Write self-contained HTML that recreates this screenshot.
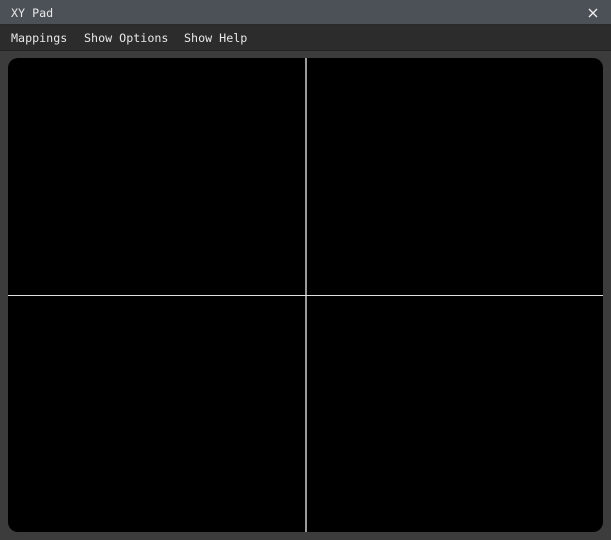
<!DOCTYPE html>
<html><head><style>
html,body{margin:0;padding:0;width:611px;height:540px;overflow:hidden;background:#3c3c3c;font-family:"DejaVu Sans Mono","Liberation Mono",monospace;}
.title{position:absolute;left:0;top:0;width:611px;height:24px;background:#4b5157;border-bottom:1px solid #2a2a2a;color:#e8e8e8;font-size:11.7px;line-height:26px;}
.title span{position:absolute;left:11px;top:0;}
.close{position:absolute;left:588px;top:8px;width:10px;height:10px;}
.menu{position:absolute;left:0;top:25px;width:611px;height:25px;background:#2c2c2c;border-bottom:1px solid #222;color:#e8e8e8;font-size:11.7px;line-height:26px;}
.menu span{position:absolute;top:0;}
.pad{position:absolute;left:8px;top:58px;width:595px;height:474px;background:#000;border-radius:10px;overflow:hidden;}
.v{position:absolute;left:297px;top:0;width:2px;height:474px;background:#9a9a9a;}
.h{position:absolute;left:0;top:237px;width:595px;height:1px;background:#e0e0e0;}
</style></head><body>
<div class="title"><span>XY Pad</span>
<svg class="close" viewBox="0 0 10 10"><path d="M1 1L9 9M9 1L1 9" stroke="#f0f0f0" stroke-width="1.3"/></svg></div>
<div class="menu"><span style="left:11px">Mappings</span><span style="left:84px">Show Options</span><span style="left:184px">Show Help</span></div>
<div class="pad"><div class="v"></div><div class="h"></div></div>
</body></html>
